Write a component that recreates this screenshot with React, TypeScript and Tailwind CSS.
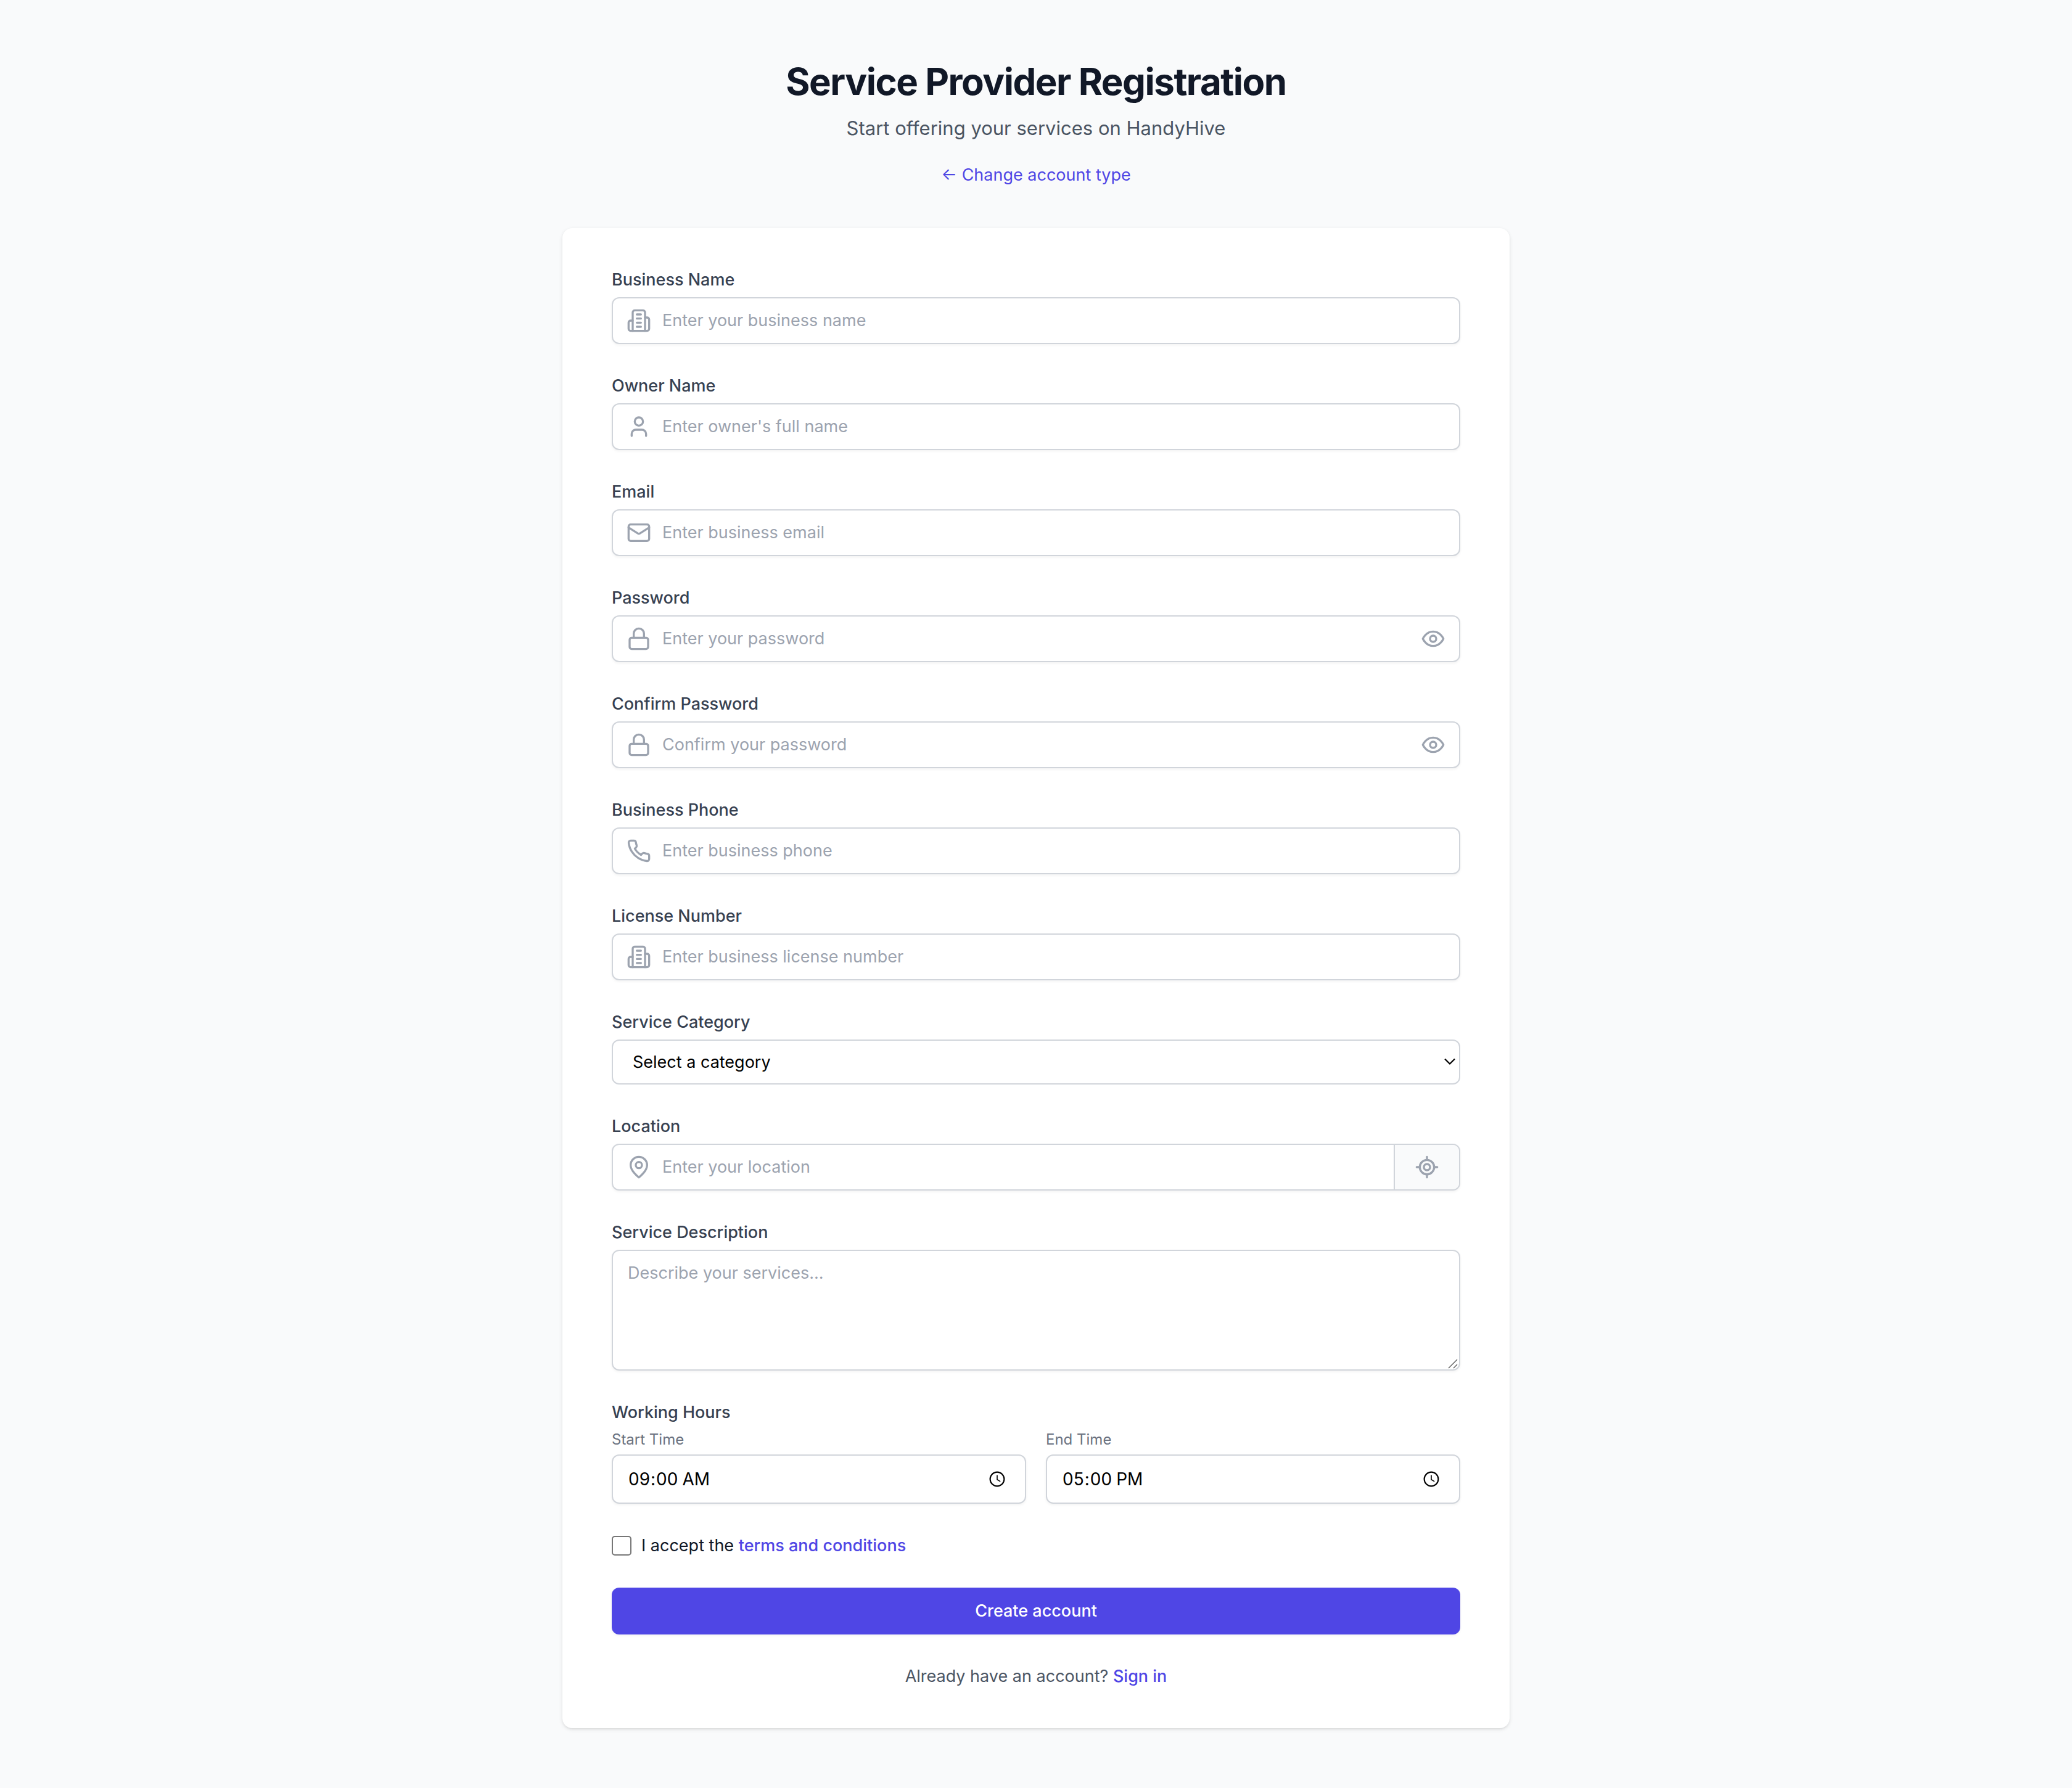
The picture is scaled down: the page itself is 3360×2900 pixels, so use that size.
import React, { useState } from "react";

type IconProps = { children: React.ReactNode; className?: string };

function Icon({ children, className = "" }: IconProps) {
  return (
    <svg
      viewBox="0 0 24 24"
      fill="none"
      stroke="currentColor"
      strokeWidth="2"
      strokeLinecap="round"
      strokeLinejoin="round"
      aria-hidden="true"
      className={`size-10 text-[#9ca3af] ${className}`}
    >
      {children}
    </svg>
  );
}

const BuildingIcon = () => (
  <Icon>
    <path d="M6 22V4a2 2 0 0 1 2-2h8a2 2 0 0 1 2 2v18Z" />
    <path d="M6 12H4a2 2 0 0 0-2 2v6a2 2 0 0 0 2 2h2" />
    <path d="M18 9h2a2 2 0 0 1 2 2v9a2 2 0 0 1-2 2h-2" />
    <path d="M10 6h4M10 10h4M10 14h4M10 18h4" />
  </Icon>
);

const UserIcon = () => (
  <Icon>
    <path d="M19 21v-2a4 4 0 0 0-4-4H9a4 4 0 0 0-4 4v2" />
    <circle cx="12" cy="7" r="4" />
  </Icon>
);

const MailIcon = () => (
  <Icon>
    <rect x="2" y="4" width="20" height="16" rx="2" />
    <path d="m22 7-8.97 5.7a1.94 1.94 0 0 1-2.06 0L2 7" />
  </Icon>
);

const LockIcon = () => (
  <Icon>
    <rect x="3" y="11" width="18" height="11" rx="2" />
    <path d="M7 11V7a5 5 0 0 1 10 0v4" />
  </Icon>
);

const PhoneIcon = () => (
  <Icon>
    <path d="M22 16.92v3a2 2 0 0 1-2.18 2 19.79 19.79 0 0 1-8.63-3.07 19.5 19.5 0 0 1-6-6 19.79 19.79 0 0 1-3.07-8.67A2 2 0 0 1 4.11 2h3a2 2 0 0 1 2 1.72 12.84 12.84 0 0 0 .7 2.81 2 2 0 0 1-.45 2.11L8.09 9.91a16 16 0 0 0 6 6l1.27-1.27a2 2 0 0 1 2.11-.45 12.84 12.84 0 0 0 2.81.7A2 2 0 0 1 22 16.92z" />
  </Icon>
);

const PinIcon = () => (
  <Icon>
    <path d="M20 10c0 6-8 12-8 12s-8-6-8-12a8 8 0 0 1 16 0Z" />
    <circle cx="12" cy="10" r="3" />
  </Icon>
);

const EyeIcon = () => (
  <Icon>
    <path d="M2 12s3-7 10-7 10 7 10 7-3 7-10 7-10-7-10-7Z" />
    <circle cx="12" cy="12" r="3" />
  </Icon>
);

const LocateIcon = () => (
  <Icon>
    <path d="M2 12h3M19 12h3M12 2v3M12 19v3" />
    <circle cx="12" cy="12" r="7" />
    <circle cx="12" cy="12" r="3" />
  </Icon>
);

const labelClass = "block font-medium text-[#374151]";
const boxClass =
  "rounded-xl border-2 border-[#d1d5db] bg-white shadow-[0_2px_4px_rgba(0,0,0,0.05)]";
const fieldClass =
  "block w-full min-w-0 bg-transparent py-4 leading-10 outline-none placeholder:text-[#9ca3af] placeholder:opacity-100";

type FieldProps = {
  id: string;
  label: string;
  placeholder: string;
  icon: React.ReactNode;
  type?: string;
};

function Field({ id, label, placeholder, icon, type = "text" }: FieldProps) {
  const [visible, setVisible] = useState(false);
  const secret = type === "password";
  return (
    <div>
      <label htmlFor={id} className={labelClass}>
        {label}
      </label>
      <div className={`mt-2 flex items-center pl-[22px] ${boxClass}`}>
        <span className="shrink-0">{icon}</span>
        <input
          id={id}
          name={id}
          type={secret && visible ? "text" : type}
          placeholder={placeholder}
          className={`pl-[18px] ${fieldClass}`}
        />
        {secret && (
          <button
            type="button"
            aria-label={visible ? "Hide password" : "Show password"}
            onClick={() => setVisible(!visible)}
            className="shrink-0 px-[22px]"
          >
            <EyeIcon />
          </button>
        )}
      </div>
    </div>
  );
}

function TimeField({ id, label, value }: { id: string; label: string; value: string }) {
  return (
    <div>
      <label htmlFor={id} className="block text-2xl leading-8 text-[#6b7280]">
        {label}
      </label>
      <div className={`relative mt-2 ${boxClass}`}>
        <input
          id={id}
          name={id}
          type="time"
          defaultValue={value}
          className="block h-[76px] w-full bg-transparent px-6 text-[28px] text-black outline-none [&::-webkit-calendar-picker-indicator]:opacity-0"
        />
        <svg
          viewBox="0 0 26 26"
          fill="none"
          stroke="black"
          aria-hidden="true"
          className="pointer-events-none absolute top-[25px] right-8 size-[26px]"
        >
          <circle cx="13" cy="13" r="11.4" strokeWidth="2.1" />
          <path d="M13 6.5v7.3l5.2 3.1" strokeWidth="1.6" />
        </svg>
      </div>
    </div>
  );
}

export default function App() {
  return (
    <main className="min-h-screen bg-[#f9fafb] px-4 py-24 font-['Inter',sans-serif] text-[27px] leading-10">
      <header className="text-center">
        <h1 className="text-6xl leading-[72px] font-bold tracking-tight text-[#111827]">
          Service Provider Registration
        </h1>
        <p className="mt-4 text-[31px] leading-[48px] text-[#4b5563]">
          Start offering your services on HandyHive
        </p>
        <a href="#account-type" className="mt-8 inline-block text-[#4f46e5]">
          ← Change account type
        </a>
      </header>

      <form
        onSubmit={(e) => e.preventDefault()}
        className="mx-auto mt-[66px] flex max-w-[1536px] flex-col gap-12 rounded-2xl bg-white px-20 py-16 shadow-[0_2px_6px_rgba(0,0,0,0.1),0_2px_4px_-2px_rgba(0,0,0,0.1)]"
      >
        <Field id="businessName" label="Business Name" placeholder="Enter your business name" icon={<BuildingIcon />} />
        <Field id="ownerName" label="Owner Name" placeholder="Enter owner's full name" icon={<UserIcon />} />
        <Field id="email" label="Email" type="email" placeholder="Enter business email" icon={<MailIcon />} />
        <Field id="password" label="Password" type="password" placeholder="Enter your password" icon={<LockIcon />} />
        <Field id="confirmPassword" label="Confirm Password" type="password" placeholder="Confirm your password" icon={<LockIcon />} />
        <Field id="phone" label="Business Phone" type="tel" placeholder="Enter business phone" icon={<PhoneIcon />} />
        <Field id="license" label="License Number" placeholder="Enter business license number" icon={<BuildingIcon />} />

        <div>
          <label htmlFor="category" className={labelClass}>
            Service Category
          </label>
          <div className="relative mt-2">
            <select
              id="category"
              name="category"
              className="block h-[73px] w-full appearance-none rounded-xl border-2 border-[#d1d5db] bg-white px-8 text-black outline-none"
            >
              <option>Select a category</option>
              <option>Plumbing</option>
              <option>Electrical</option>
              <option>Cleaning</option>
            </select>
            <svg
              viewBox="0 0 18 12"
              fill="none"
              stroke="black"
              strokeWidth="2.2"
              aria-hidden="true"
              className="pointer-events-none absolute top-[30px] right-2 h-3 w-[18px]"
            >
              <path d="M1 1.5l8 8 8-8" />
            </svg>
          </div>
        </div>

        <div>
          <label htmlFor="location" className={labelClass}>
            Location
          </label>
          <div className={`mt-2 flex items-center overflow-hidden pl-[22px] ${boxClass}`}>
            <span className="shrink-0">
              <PinIcon />
            </span>
            <input
              id="location"
              name="location"
              type="text"
              placeholder="Enter your location"
              className={`pl-[18px] ${fieldClass}`}
            />
            <button
              type="button"
              aria-label="Use current location"
              className="flex shrink-0 items-center self-stretch border-l-2 border-[#d1d5db] bg-[#f9fafb] px-8"
            >
              <LocateIcon />
            </button>
          </div>
        </div>

        <div>
          <label htmlFor="description" className={labelClass}>
            Service Description
          </label>
          <div className={`relative mt-2 ${boxClass}`}>
            <textarea
              id="description"
              name="description"
              rows={4}
              placeholder="Describe your services..."
              className={`resize-none px-6 ${fieldClass}`}
            />
            <svg
              viewBox="0 0 16 16"
              fill="none"
              stroke="#5a5a5a"
              strokeWidth="1.4"
              aria-hidden="true"
              className="pointer-events-none absolute right-0.5 bottom-px size-4"
            >
              <path d="M1 15L15 1M9 15l6-6" />
            </svg>
          </div>
        </div>

        <fieldset>
          <legend className={labelClass}>Working Hours</legend>
          <div className="mt-2 grid grid-cols-2 gap-8">
            <TimeField id="startTime" label="Start Time" value="09:00" />
            <TimeField id="endTime" label="End Time" value="17:00" />
          </div>
        </fieldset>

        <div className="flex items-center gap-4">
          <input
            id="terms"
            name="terms"
            type="checkbox"
            className="size-8 appearance-none rounded-[5px] border-2 border-[#767676] bg-white checked:bg-[#4f46e5]"
          />
          <label htmlFor="terms" className="text-[#111827]">
            I accept the{" "}
            <a href="#terms" className="font-medium text-[#4f46e5]">
              terms and conditions
            </a>
          </label>
        </div>

        <button
          type="submit"
          className="rounded-xl bg-[#4f46e5] py-[18px] font-medium text-white shadow-[0_2px_4px_rgba(0,0,0,0.05)]"
        >
          Create account
        </button>

        <p className="text-center text-[#4b5563]">
          Already have an account?{" "}
          <a href="#sign-in" className="font-medium text-[#4f46e5]">
            Sign in
          </a>
        </p>
      </form>
    </main>
  );
}
